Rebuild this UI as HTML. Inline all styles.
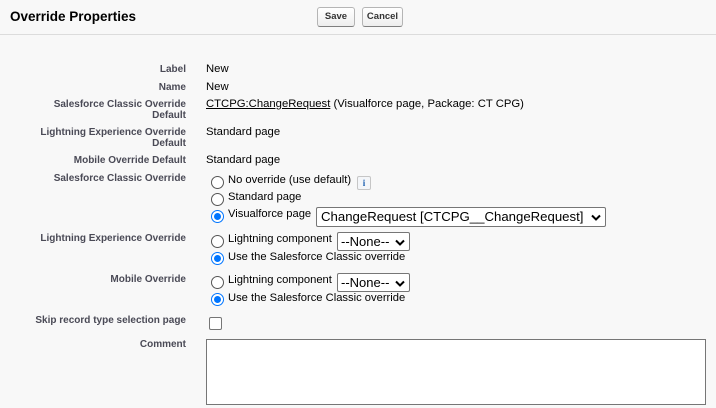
<!DOCTYPE html>
<html><head><style>
body{margin:0;width:716px;height:408px;background:#f8f8f8;font-family:"Liberation Sans",Arial,sans-serif;position:relative;overflow:hidden}
.a{position:absolute;white-space:nowrap}
.l{position:absolute;right:530px;text-align:right;font-size:10px;font-weight:bold;color:#4a4a56;line-height:11px}
.v{position:absolute;left:206px;font-size:11.3px;color:#000;white-space:nowrap;line-height:12px}
.r{position:absolute;width:13px;height:13px;border:1px solid #555;border-radius:50%;background:#fff;box-sizing:border-box}
.r.on{border:1px solid #0075ff}
.r.on::after{content:"";position:absolute;left:2px;top:2px;width:7px;height:7px;border-radius:50%;background:#0075ff}
.t{position:absolute;left:228px;font-size:11.2px;color:#000;white-space:nowrap}
.btn{position:absolute;top:7px;height:20px;border:1px solid #b5b5b5;border-bottom-color:#7f7f7f;border-radius:3px;background:linear-gradient(#fff,#eee);font-size:9.5px;font-weight:bold;color:#333;box-sizing:border-box;text-align:center;line-height:18px}
.sel{position:absolute;background:#fff;border:1px solid #767676;border-radius:2px;box-sizing:border-box;color:#000;white-space:nowrap}
.sel svg{position:absolute;right:4px;top:50%;margin-top:-3px}
</style></head><body>
<div class="a" style="left:10px;top:9px;font-size:13.5px;font-weight:bold;color:#000">Override Properties</div>
<div class="btn" style="left:317px;width:38px">Save</div>
<div class="btn" style="left:362px;width:41px">Cancel</div>
<div class="a" style="left:0;top:34px;width:716px;height:1px;background:#dcdcdc"></div>

<div class="l" style="top:64px">Label</div><div class="v" style="top:63px">New</div>
<div class="l" style="top:82px">Name</div><div class="v" style="top:81px">New</div>
<div class="l" style="top:99px">Salesforce Classic Override<br>Default</div><div class="v" style="top:98px"><u>CTCPG:ChangeRequest</u> (Visualforce page, Package: CT CPG)</div>
<div class="l" style="top:127px">Lightning Experience Override<br>Default</div><div class="v" style="top:126px">Standard page</div>
<div class="l" style="top:155px">Mobile Override Default</div><div class="v" style="top:154px">Standard page</div>

<div class="l" style="top:173px">Salesforce Classic Override</div>
<div class="r" style="left:211px;top:176px"></div><div class="t" style="top:174px">No override (use default)</div>
<div class="a" style="left:357px;top:176px;width:12px;height:12px;border:1px solid #c6c6c6;border-radius:2px;background:#f4f6f9;font-size:9px;font-weight:bold;color:#1b5fb0;text-align:center;line-height:12px;font-family:'Liberation Serif',serif">i</div>
<div class="r" style="left:211px;top:193px"></div><div class="t" style="top:191px">Standard page</div>
<div class="r on" style="left:211px;top:210px"></div><div class="t" style="top:208px">Visualforce page</div>
<div class="sel" style="left:316px;top:207px;width:290px;height:20px;font-size:13.2px;line-height:18px;padding-left:4px">ChangeRequest [CTCPG__ChangeRequest]<svg width="10" height="7" viewBox="0 0 10 7"><path d="M1 1.5L5 5.5L9 1.5" fill="none" stroke="#000" stroke-width="2"/></svg></div>

<div class="l" style="top:233px">Lightning Experience Override</div>
<div class="r" style="left:211px;top:235px"></div><div class="t" style="top:233px">Lightning component</div>
<div class="sel" style="left:337px;top:232px;width:73px;height:19px;font-size:13px;line-height:17px;padding-left:3px">--None--<svg width="10" height="7" viewBox="0 0 10 7"><path d="M1 1.5L5 5.5L9 1.5" fill="none" stroke="#000" stroke-width="2"/></svg></div>
<div class="r on" style="left:211px;top:252px"></div><div class="t" style="top:251px">Use the Salesforce Classic override</div>

<div class="l" style="top:274px">Mobile Override</div>
<div class="r" style="left:211px;top:276px"></div><div class="t" style="top:274px">Lightning component</div>
<div class="sel" style="left:337px;top:273px;width:73px;height:19px;font-size:13px;line-height:17px;padding-left:3px">--None--<svg width="10" height="7" viewBox="0 0 10 7"><path d="M1 1.5L5 5.5L9 1.5" fill="none" stroke="#000" stroke-width="2"/></svg></div>
<div class="r on" style="left:211px;top:293px"></div><div class="t" style="top:292px">Use the Salesforce Classic override</div>

<div class="l" style="top:315px">Skip record type selection page</div>
<div class="a" style="left:209px;top:317px;width:13px;height:13px;border:1px solid #767676;border-radius:2px;background:#fff;box-sizing:border-box"></div>

<div class="l" style="top:339px">Comment</div>
<div class="a" style="left:206px;top:339px;width:500px;height:66px;border:1px solid #767676;background:#fff;box-sizing:border-box"></div>
</body></html>
